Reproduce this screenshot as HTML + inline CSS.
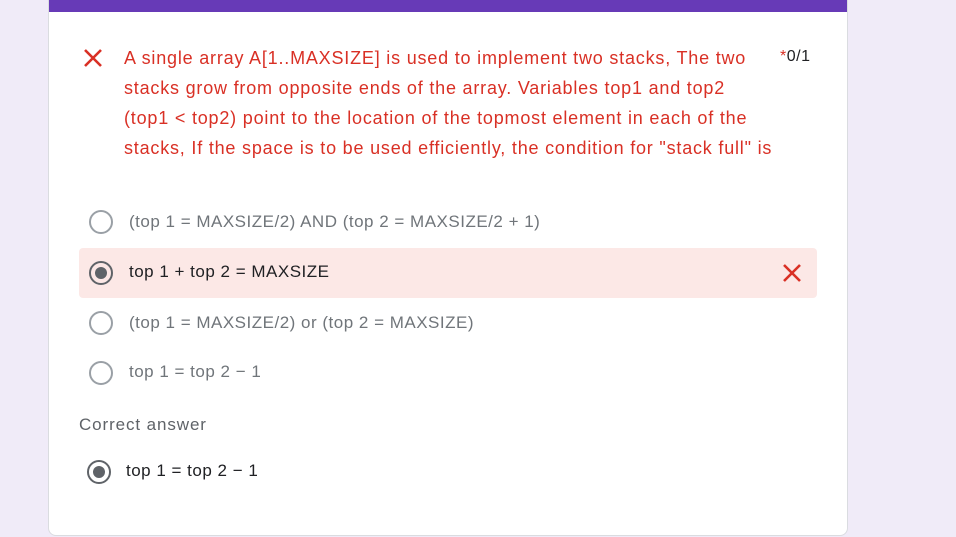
<!DOCTYPE html>
<html><head><meta charset="utf-8"><style>
*{margin:0;padding:0;box-sizing:border-box}
body{width:956px;height:537px;background:#f0ebf8;font-family:"Liberation Sans",Arial,sans-serif;position:relative;overflow:hidden}
.card{position:absolute;left:48px;top:-10px;width:800px;height:546px;background:#fff;border:1px solid #dadce0;border-radius:8px;overflow:hidden}
.bar{position:absolute;left:0;top:0;width:100%;height:21px;background:#673ab7}
.abs{position:absolute}
.q{left:75px;top:52px;width:700px;white-space:nowrap;color:#d93025;font-size:18px;letter-spacing:0.8px;line-height:30px}
.pts{left:731px;top:57px;font-size:16px;color:#202124;letter-spacing:0.5px}
.pts span{color:#d93025}
.xq{left:34px;top:57px}
.radio{position:absolute;width:24px;height:24px;border:2px solid #9aa0a6;border-radius:50%}
.radio.sel{border-color:#5f6368}
.radio.sel::after{content:"";position:absolute;left:4px;top:4px;width:12px;height:12px;border-radius:50%;background:#5f6368}
.opt{position:absolute;font-size:17px;letter-spacing:0.5px;color:#70757a}
.pink{left:30px;top:257px;width:738px;height:50px;background:#fce8e6;border-radius:4px}
</style></head><body>
<div class="card">
<div class="bar"></div>
<svg class="abs xq" width="20" height="20" viewBox="0 0 20 20"><path d="M2 2L18 18M18 2L2 18" stroke="#d93025" stroke-width="2.6"/></svg>
<div class="abs q">A single array A[1..MAXSIZE] is used to implement two stacks, The two<br>stacks grow from opposite ends of the array. Variables top1 and top2<br>(top1 &lt; top2) point to the location of the topmost element in each of the<br>stacks, If the space is to be used efficiently, the condition for "stack full" is</div>
<div class="abs pts"><span>*</span>0/1</div>

<div class="radio" style="left:40px;top:219px"></div>
<div class="opt" style="left:80px;top:221px">(top 1 = MAXSIZE/2) AND (top 2 = MAXSIZE/2 + 1)</div>

<div class="abs pink"></div>
<div class="radio sel" style="left:40px;top:270px"></div>
<div class="opt" style="left:80px;top:271px;color:#202124">top 1 + top 2 = MAXSIZE</div>
<svg class="abs" style="left:733px;top:272px" width="20" height="20" viewBox="0 0 20 20"><path d="M2 2L18 18M18 2L2 18" stroke="#d93025" stroke-width="2.6"/></svg>

<div class="radio" style="left:40px;top:320px"></div>
<div class="opt" style="left:80px;top:322px">(top 1 = MAXSIZE/2) or (top 2 = MAXSIZE)</div>

<div class="radio" style="left:40px;top:370px"></div>
<div class="opt" style="left:80px;top:371px">top 1 = top 2 − 1</div>

<div class="opt" style="left:30px;top:424px;color:#5f6368;letter-spacing:0.9px">Correct answer</div>
<div class="radio sel" style="left:38px;top:469px"></div>
<div class="opt" style="left:77px;top:470px;color:#202124">top 1 = top 2 − 1</div>
</div>
</body></html>
